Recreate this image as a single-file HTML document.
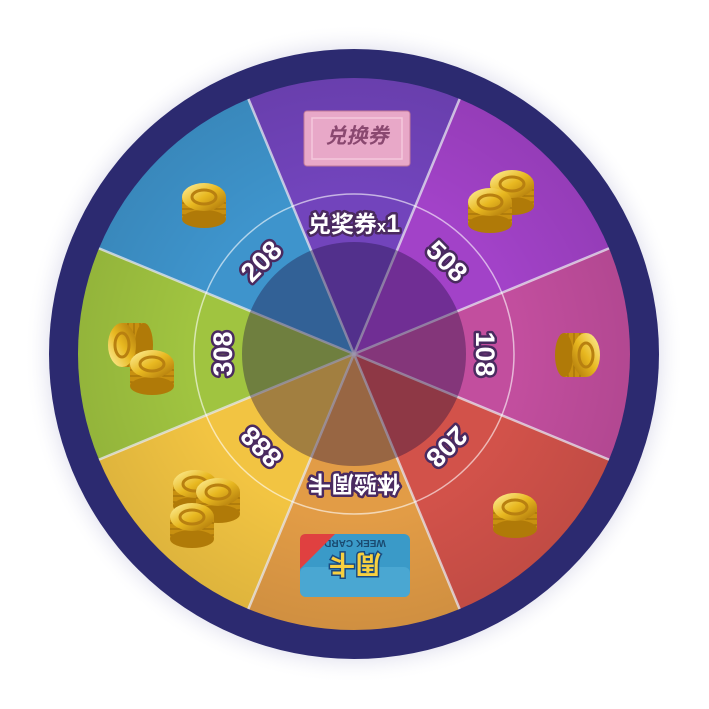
<!DOCTYPE html><html><head><meta charset="utf-8"><style>
html,body{margin:0;padding:0;background:#fff;width:709px;height:709px;overflow:hidden}
text{font-family:"Liberation Sans","Noto Sans CJK SC",sans-serif;font-weight:bold}
</style></head><body>
<svg width="709" height="709" viewBox="0 0 709 709" xmlns="http://www.w3.org/2000/svg">
<defs>
<radialGradient id="glow" cx="0.5" cy="0.5" r="0.5"><stop offset="0.9" stop-color="#c8c8e0" stop-opacity="0.6"/><stop offset="1" stop-color="#fff" stop-opacity="0"/></radialGradient>
<radialGradient id="shade" cx="0.5" cy="0.5" r="0.5"><stop offset="0.6" stop-color="#000" stop-opacity="0"/><stop offset="1" stop-color="#000" stop-opacity="0.08"/></radialGradient>
<linearGradient id="gold" x1="0" y1="0" x2="1" y2="1"><stop offset="0" stop-color="#fff2a0"/><stop offset="0.5" stop-color="#e8b820"/><stop offset="1" stop-color="#a87008"/></linearGradient>
<g id="coin"><rect x="-22" y="-8" width="44" height="22" fill="#c89010"/><g fill="none" stroke="#9a6a08" stroke-width="1"><line x1="-22" y1="-2" x2="22" y2="-2"/><line x1="-22" y1="4" x2="22" y2="4"/><line x1="-22" y1="10" x2="22" y2="10"/></g><ellipse cx="0" cy="14" rx="22" ry="9" fill="#b07a08"/><ellipse cx="0" cy="-8" rx="22" ry="14" fill="url(#gold)"/><ellipse cx="0" cy="-8" rx="12" ry="7" fill="none" stroke="#b88010" stroke-width="3"/></g>
</defs>
<circle cx="354" cy="354" r="330" fill="url(#glow)"/>
<circle cx="354" cy="354" r="305" fill="#2c2a70"/>
<g transform="translate(354,354)">
<g id="wedges">
<path d="M0 0 L-105.6 -255 A276 276 0 0 1 105.6 -255 Z" fill="#7244bc"/>
<path d="M0 0 L-105.6 -255 A276 276 0 0 1 105.6 -255 Z" fill="#a242c8" transform="rotate(45)"/>
<path d="M0 0 L-105.6 -255 A276 276 0 0 1 105.6 -255 Z" fill="#c24e9e" transform="rotate(90)"/>
<path d="M0 0 L-105.6 -255 A276 276 0 0 1 105.6 -255 Z" fill="#d2524a" transform="rotate(135)"/>
<path d="M0 0 L-105.6 -255 A276 276 0 0 1 105.6 -255 Z" fill="#e29c46" transform="rotate(180)"/>
<path d="M0 0 L-105.6 -255 A276 276 0 0 1 105.6 -255 Z" fill="#f2c442" transform="rotate(225)"/>
<path d="M0 0 L-105.6 -255 A276 276 0 0 1 105.6 -255 Z" fill="#a0c440" transform="rotate(270)"/>
<path d="M0 0 L-105.6 -255 A276 276 0 0 1 105.6 -255 Z" fill="#3e94cc" transform="rotate(315)"/>
</g>
<circle r="276" fill="url(#shade)"/>
<g stroke="#e8e8f0" stroke-opacity="0.75" stroke-width="2.5">
<line x1="0" y1="0" x2="-105.6" y2="-255"/><line x1="0" y1="0" x2="-105.6" y2="-255" transform="rotate(45)"/><line x1="0" y1="0" x2="-105.6" y2="-255" transform="rotate(90)"/><line x1="0" y1="0" x2="-105.6" y2="-255" transform="rotate(135)"/><line x1="0" y1="0" x2="-105.6" y2="-255" transform="rotate(180)"/><line x1="0" y1="0" x2="-105.6" y2="-255" transform="rotate(225)"/><line x1="0" y1="0" x2="-105.6" y2="-255" transform="rotate(270)"/><line x1="0" y1="0" x2="-105.6" y2="-255" transform="rotate(315)"/>
</g>
<circle r="160" fill="none" stroke="#fff" stroke-opacity="0.6" stroke-width="1.5"/>
<circle r="112" fill="#201040" fill-opacity="0.38"/>
<g font-size="27" fill="#fff" stroke="#4a2a60" stroke-width="5" stroke-linejoin="round" paint-order="stroke" text-anchor="middle">
<text y="-122" font-size="23">兑奖券<tspan font-size="17">x</tspan><tspan font-size="25">1</tspan></text>
<text y="-122" transform="rotate(45)">508</text>
<text y="-122" transform="rotate(90)">108</text>
<text y="-122" transform="rotate(135)">208</text>
<text y="-122" font-size="23" transform="rotate(180)">体验周卡</text>
<text y="-122" transform="rotate(225)">888</text>
<text y="-122" transform="rotate(270)">308</text>
<text y="-122" transform="rotate(315)">208</text>
</g>
</g>
<rect x="304" y="111" width="106" height="55" rx="3" fill="#e8a8c8" stroke="#c07898"/>
<rect x="312" y="118" width="90" height="41" fill="none" stroke="#f4c8dc" stroke-width="1.5"/>
<text x="357" y="143" font-size="21" fill="#8a4870" text-anchor="middle" font-style="italic">兑换券</text>
<g transform="rotate(180 355 565)">
<rect x="300" y="533" width="110" height="63" rx="6" fill="#3a9ac8"/>
<rect x="300" y="533" width="110" height="30" rx="6" fill="#5ab4dc" fill-opacity="0.5"/>
<text x="355" y="575" font-size="26" fill="#f8d040" stroke="#1a4a80" stroke-width="3" paint-order="stroke" text-anchor="middle">周卡</text>
<text x="355" y="590" font-size="10" fill="#1a4a70" text-anchor="middle">WEEK CARD</text>
<path d="M375 596 L410 561 L410 590 Q410 596 404 596 Z" fill="#e04040"/>
</g>
<g transform="translate(204,205)"><use href="#coin"/></g>
<g transform="translate(512,192)"><use href="#coin"/></g>
<g transform="translate(490,210)"><use href="#coin"/></g>
<g transform="translate(578,355) rotate(90)"><use href="#coin"/></g>
<g transform="translate(515,515)"><use href="#coin"/></g>
<g transform="translate(130,345) rotate(-90)"><use href="#coin"/></g>
<g transform="translate(152,372)"><use href="#coin"/></g>
<g transform="translate(195,492)"><use href="#coin"/></g>
<g transform="translate(218,500)"><use href="#coin"/></g>
<g transform="translate(192,525)"><use href="#coin"/></g>
</svg>
</body></html>
